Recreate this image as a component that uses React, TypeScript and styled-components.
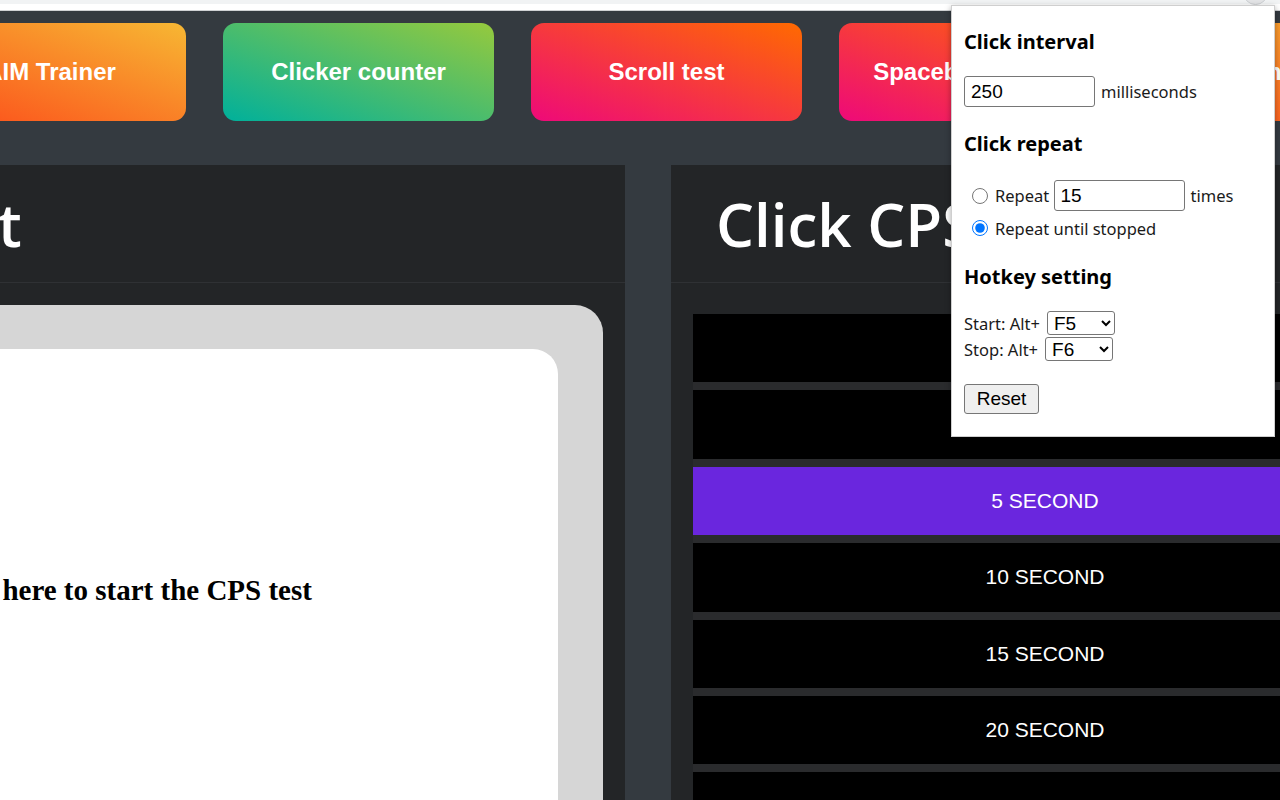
import React from "react";
import styled, { createGlobalStyle } from "styled-components";

const GlobalStyle = createGlobalStyle`
  html, body {
    margin: 0;
    padding: 0;
  }
  body {
    background: #343a40;
    overflow: hidden;
    font-family: "Liberation Sans", Arial, sans-serif;
  }
`;

// the page is scrolled sideways, so panels start left of the viewport
const MAIN_OFFSET = -384;
const LEFT_PANEL_WIDTH = 625 - MAIN_OFFSET;

const navItems = [
  { label: "AIM Trainer", from: "#fc4a1a", to: "#f7b733" },
  { label: "Clicker counter", from: "#00b09b", to: "#96c93d" },
  { label: "Scroll test", from: "#ee0979", to: "#ff6a00" },
  { label: "Spacebar counter", from: "#ee0979", to: "#ff6a00" },
  { label: "Typing test", from: "#fc4a1a", to: "#f7b733" },
];

const durations = [1, 2, 5, 10, 15, 20, 30, 60];

const Page = styled.div`
  position: relative;
  width: 1280px;
  height: 800px;
  overflow: hidden;
  background: #343a40;
`;

const BrowserStrip = styled.div`
  position: relative;
  height: 6px;
  background: #ffffff;
  border-top: 4px solid #f1f3f4;
  border-bottom: 1px solid #cfd1d4;
`;

const Avatar = styled.div`
  position: absolute;
  left: 1243px;
  top: -24px;
  width: 23px;
  height: 23px;
  border-radius: 50%;
  background: #e3e4e6;
  border: 1px solid #cdd0d3;
`;

const Nav = styled.nav`
  display: flex;
  gap: 37px;
  padding: 12px 0 44px;
  margin-left: -85px;
`;

const NavButton = styled.a<{ $from: string; $to: string }>`
  flex: 0 0 271px;
  height: 98px;
  border-radius: 13px;
  background: linear-gradient(to top right, ${(p) => p.$from}, ${(p) => p.$to});
  display: flex;
  align-items: center;
  justify-content: center;
  color: #ffffff;
  font-family: "Liberation Sans", Arial, sans-serif;
  font-weight: 700;
  font-size: 24px;
  white-space: nowrap;
  text-decoration: none;
`;

const Main = styled.main`
  display: flex;
  gap: 46px;
  margin-left: ${MAIN_OFFSET}px;
  align-items: flex-start;
`;

const Panel = styled.section<{ $width: number }>`
  flex: 0 0 ${(p) => p.$width}px;
  height: 700px;
  background: #232527;
`;

const PanelHeader = styled.header`
  height: 118px;
  box-sizing: border-box;
  border-bottom: 1px solid #2f3134;
  padding: 0 45px;
  display: flex;
  align-items: center;
`;

const PanelTitle = styled.h1`
  margin: 0;
  color: #ffffff;
  font-family: "Open Sans", "Noto Sans", sans-serif;
  font-weight: 600;
  font-size: 60px;
  white-space: nowrap;
`;

const ClickBody = styled.div`
  padding: 22px 22px 0;
`;

const ClickFrame = styled.div`
  background: #d6d6d6;
  border-radius: 28px 28px 0 0;
  padding: 44px 45px 0;
`;

const ClickArea = styled.div`
  height: 482px;
  background: #ffffff;
  border-radius: 25px 25px 0 0;
  display: flex;
  align-items: center;
  justify-content: center;
  font-family: "Liberation Serif", "Times New Roman", serif;
  font-weight: 700;
  font-size: 29px;
  color: #000000;
`;

const DurationBody = styled.div`
  padding: 31px 22px 0;
`;

const DurationList = styled.div`
  display: flex;
  flex-direction: column;
  gap: 8px;
  background: #2a2b2d;
`;

const DurationRow = styled.div<{ $active?: boolean }>`
  height: 68.4px;
  display: flex;
  align-items: center;
  justify-content: center;
  background: ${(p) => (p.$active ? "#6a26de" : "#000000")};
  color: #ffffff;
  font-family: "Liberation Sans", Arial, sans-serif;
  font-size: 21px;
`;

const Popup = styled.div`
  position: absolute;
  left: 951px;
  top: 5px;
  width: 324px;
  box-sizing: border-box;
  padding: 0 12px 22px;
  background: #ffffff;
  border: 1px solid #cfcfcf;
  box-shadow: 0 2px 6px rgba(0, 0, 0, 0.35);
  font-family: "Noto Sans", "Open Sans", sans-serif;
  font-size: 16.5px;
  color: #1a1a1a;
`;

const SectionTitle = styled.h3<{ $gap: number }>`
  margin: ${(p) => p.$gap}px 0 0;
  line-height: 24px;
  font-size: 20px;
  font-weight: 700;
  color: #000000;
`;

const Row = styled.div<{ $gap: number; $height: number; $indent?: number }>`
  display: flex;
  align-items: center;
  margin-top: ${(p) => p.$gap}px;
  height: ${(p) => p.$height}px;
  padding-left: ${(p) => p.$indent || 0}px;
  white-space: nowrap;
`;

const NumberInput = styled.input`
  box-sizing: border-box;
  width: 131px;
  height: 31px;
  padding: 0 6px;
  border: 1px solid #767676;
  border-radius: 3px;
  font-family: "Liberation Sans", Arial, sans-serif;
  font-size: 19px;
  color: #000000;
  margin-right: 6px;
`;

const Radio = styled.input`
  width: 16px;
  height: 16px;
  margin: 0 7px 0 0;
`;

const KeySelect = styled.select`
  box-sizing: border-box;
  width: 68px;
  height: 24px;
  margin-left: 7px;
  padding: 0 2px;
  border: 1px solid #767676;
  border-radius: 3px;
  background: #ffffff;
  font-family: "Liberation Sans", Arial, sans-serif;
  font-size: 19px;
  color: #000000;
`;

const ResetButton = styled.button`
  box-sizing: border-box;
  width: 75px;
  height: 30px;
  padding: 0;
  border: 1px solid #767676;
  border-radius: 3px;
  background: #efefef;
  font-family: "Liberation Sans", Arial, sans-serif;
  font-size: 19px;
  color: #000000;
`;

const keys = ["F1", "F2", "F3", "F4", "F5", "F6", "F7", "F8", "F9"];

export default function App() {
  const [interval, setInterval] = React.useState("250");
  const [repeat, setRepeat] = React.useState("15");
  const [mode, setMode] = React.useState("until");
  const [startKey, setStartKey] = React.useState("F5");
  const [stopKey, setStopKey] = React.useState("F6");

  return (
    <Page>
      <GlobalStyle />
      <BrowserStrip>
        <Avatar />
      </BrowserStrip>

      <Nav>
        {navItems.map((item) => (
          <NavButton key={item.label} $from={item.from} $to={item.to}>
            {item.label}
          </NavButton>
        ))}
      </Nav>

      <Main>
        <Panel $width={LEFT_PANEL_WIDTH}>
          <PanelHeader>
            <PanelTitle>Clicking Test</PanelTitle>
          </PanelHeader>
          <ClickBody>
            <ClickFrame>
              <ClickArea>Click here to start the CPS test</ClickArea>
            </ClickFrame>
          </ClickBody>
        </Panel>

        <Panel $width={748}>
          <PanelHeader>
            <PanelTitle>Click CPS Test</PanelTitle>
          </PanelHeader>
          <DurationBody>
            <DurationList>
              {durations.map((d) => (
                <DurationRow key={d} $active={d === 5}>
                  {d} SECOND
                </DurationRow>
              ))}
            </DurationList>
          </DurationBody>
        </Panel>
      </Main>

      <Popup>
        <SectionTitle $gap={24}>Click interval</SectionTitle>
        <Row $gap={22} $height={31}>
          <NumberInput value={interval} onChange={(e) => setInterval(e.target.value)} />
          milliseconds
        </Row>

        <SectionTitle $gap={25}>Click repeat</SectionTitle>
        <Row $gap={24} $height={31} $indent={8}>
          <Radio type="radio" checked={mode === "count"} onChange={() => setMode("count")} />
          Repeat&nbsp;
          <NumberInput value={repeat} onChange={(e) => setRepeat(e.target.value)} />
          times
        </Row>
        <Row $gap={5} $height={24} $indent={8}>
          <Radio type="radio" checked={mode === "until"} onChange={() => setMode("until")} />
          Repeat until stopped
        </Row>

        <SectionTitle $gap={25}>Hotkey setting</SectionTitle>
        <Row $gap={22} $height={24}>
          Start: Alt+
          <KeySelect value={startKey} onChange={(e) => setStartKey(e.target.value)}>
            {keys.map((k) => (
              <option key={k}>{k}</option>
            ))}
          </KeySelect>
        </Row>
        <Row $gap={2} $height={24}>
          Stop: Alt+
          <KeySelect value={stopKey} onChange={(e) => setStopKey(e.target.value)}>
            {keys.map((k) => (
              <option key={k}>{k}</option>
            ))}
          </KeySelect>
        </Row>

        <Row $gap={23} $height={30}>
          <ResetButton>Reset</ResetButton>
        </Row>
      </Popup>
    </Page>
  );
}
